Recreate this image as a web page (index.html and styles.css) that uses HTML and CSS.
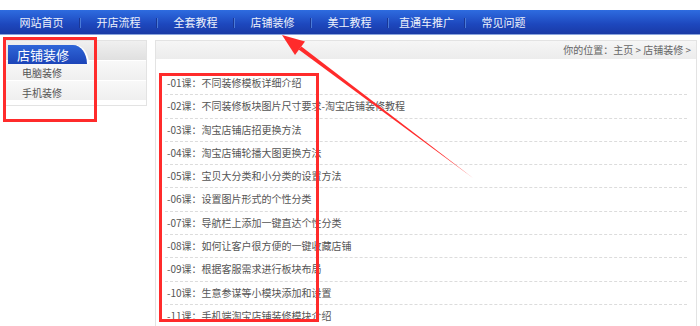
FILE: index.html
```html
<!DOCTYPE html>
<html lang="zh-CN">
<head>
    <meta charset="UTF-8">
    <title>店铺装修</title>
    <link rel="stylesheet" href="styles.css">
</head>
<body>
    <div class="nav">
        <a href="#">网站首页</a>
        <a href="#">开店流程</a>
        <a href="#">全套教程</a>
        <a href="#">店铺装修</a>
        <a href="#">美工教程</a>
        <a href="#">直通车推广</a>
        <a href="#" class="last">常见问题</a>
    </div>

    <div class="page">
        <div class="side">
            <div class="side-head"><span class="tab">店铺装修</span></div>
            <ul class="side-list">
                <li><a href="#">电脑装修</a></li>
                <li><a href="#">手机装修</a></li>
            </ul>
        </div>

        <div class="main">
            <div class="main-head">你的位置：主页 &gt; 店铺装修 &gt;</div>
            <ul class="lessons">
                <li>-01课：不同装修模板详细介绍</li>
                <li>-02课：不同装修板块图片尺寸要求-淘宝店铺装修教程</li>
                <li>-03课：淘宝店铺店招更换方法</li>
                <li>-04课：淘宝店铺轮播大图更换方法</li>
                <li>-05课：宝贝大分类和小分类的设置方法</li>
                <li>-06课：设置图片形式的个性分类</li>
                <li>-07课：导航栏上添加一键直达个性分类</li>
                <li>-08课：如何让客户很方便的一键收藏店铺</li>
                <li>-09课：根据客服需求进行板块布局</li>
                <li>-10课：生意参谋等小模块添加和设置</li>
                <li>-11课：手机端淘宝店铺装修模块介绍</li>
            </ul>
        </div>
    </div>

    <!-- annotations drawn over the screenshot -->
    <div class="mark mark-side"></div>
    <div class="mark mark-list"></div>
    <svg class="arrow" width="700" height="326" viewBox="0 0 700 326">
        <polygon points="473,178 301.4,46.6 298.6,49.4" fill="#ff2b2b"/>
        <polygon points="282,35 305,41.6 295,55" fill="#ff2b2b"/>
    </svg>
</body>
</html>
```

FILE: styles.css
```css
body {
    margin: 0;
    padding-top: 10px;
    font-family: "Noto Sans CJK SC", "Liberation Sans", sans-serif;
    background: #fff;
    height: 316px;
    overflow: hidden;
    position: relative;
}

a {
    text-decoration: none;
}

.nav {
    height: 24px;
    padding-left: 3px;
    display: flex;
    background: linear-gradient(#2e6ce0, #1d47bd 60%, #1a3aa6);
    border-bottom: 1px solid #8aa4dc;
}

.nav a {
    width: 77px;
    line-height: 24px;
    text-align: center;
    font-size: 11px;
    color: #eef2fb;
    position: relative;
}

.nav a::after {
    content: "";
    position: absolute;
    right: 0;
    top: 8px;
    height: 10px;
    border-right: 1px solid #1a3796;
    box-shadow: 1px 0 0 #4a7ad8;
}

.nav a.last::after {
    display: none;
}

.page {
    display: flex;
    align-items: flex-start;
    padding: 5px 3px 0 5px;
    gap: 8px;
}

.side {
    width: 140px;
    border: 1px solid #e3e3e3;
    background: #fff;
    padding-bottom: 5px;
}

.side-head {
    height: 19px;
    background: linear-gradient(#f0f0f0, #e0e0e0);
    padding-left: 2px;
}

.side-head .tab {
    display: inline-block;
    width: 70px;
    height: 19px;
    line-height: 19px;
    padding-left: 9px;
    font-size: 13px;
    color: #fff;
    background: linear-gradient(#2f66d8, #1c44b8);
    border-top-right-radius: 14px 19px;
    box-shadow: 2px 0 0 #fff;
}

.side-list {
    list-style: none;
    margin: 0;
    padding: 0;
}

.side-list li {
    height: 19px;
    line-height: 18px;
    padding-left: 16px;
    background: linear-gradient(#f8f8f8, #efefef);
    border-top: 1px solid #fff;
}

.side-list a {
    font-size: 10px;
    color: #555;
}

.main {
    flex: 1;
    height: 290px;
    border: 1px solid #e3e3e3;
    border-bottom: none;
    background: #fff;
}

.main-head {
    height: 18px;
    line-height: 18px;
    text-align: right;
    padding-right: 5px;
    font-size: 10px;
    color: #666;
    background: linear-gradient(#f6f6f6, #ececec);
}

.lessons {
    list-style: none;
    margin: 13px 9px 0 9px;
    padding: 0;
}

.lessons li {
    height: 22.3px;
    line-height: 22px;
    padding-left: 2px;
    font-size: 10px;
    color: #555;
    border-bottom: 1px dashed #dcdcdc;
}

.mark {
    position: absolute;
    border: 3px solid #ff2b2b;
}

.mark-side {
    left: 3px;
    top: 37px;
    width: 88px;
    height: 79px;
}

.mark-list {
    left: 159px;
    top: 73px;
    width: 154px;
    height: 243px;
}

.arrow {
    position: absolute;
    left: 0;
    top: 0;
}
```
